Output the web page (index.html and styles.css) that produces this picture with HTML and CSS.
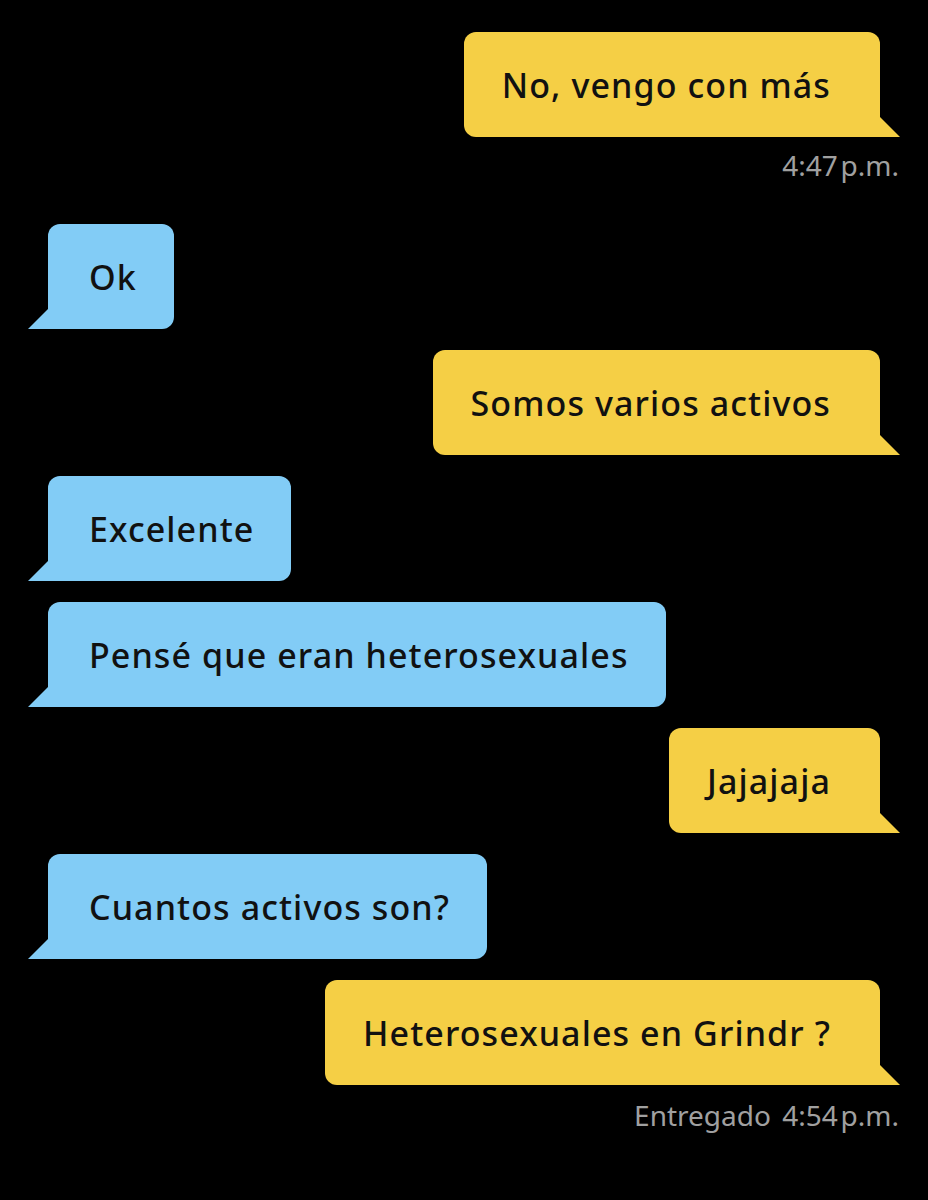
FILE: index.html
```html
<!doctype html>
<html lang="es">
<head>
    <meta charset="UTF-8">
    <title>Chat</title>
    <link rel="stylesheet" href="styles.css">
</head>
<body>
    <div class="chat">
        <div class="msg sent">No, vengo con más</div>
        <div class="time first">4:47&#8202;p.m.</div>
        <div class="msg recv">Ok</div>
        <div class="msg sent">Somos varios activos</div>
        <div class="msg recv">Excelente</div>
        <div class="msg recv">Pensé que eran heterosexuales</div>
        <div class="msg sent">Jajajaja</div>
        <div class="msg recv">Cuantos activos son?</div>
        <div class="msg sent">Heterosexuales en Grindr ?</div>
        <div class="time last"><span class="status">Entregado</span> 4:54&#8202;p.m.</div>
    </div>
</body>
</html>
```

FILE: styles.css
```css
body{
    margin:0;
    padding:0;
    background:#000;
    font-family:"Noto Sans","Open Sans",sans-serif;
}
.chat{
    display:flex;
    flex-direction:column;
    gap:21px;
    padding:32px 29px 40px 29px;
}
.msg{
    position:relative;
    height:105px;
    box-sizing:border-box;
    display:flex;
    align-items:center;
    font-size:34px;
    font-weight:500;
    letter-spacing:1.1px;
    color:#111;
    border-radius:12px;
}
.msg::after{
    content:"";
    position:absolute;
    bottom:0;
    width:20px;
    height:20px;
}
.sent{
    align-self:flex-end;
    margin-right:19px;
    padding:0 49px 0 38px;
    background:#f5cf45;
    border-bottom-right-radius:0;
}
.sent::after{
    right:-20px;
    background:#f5cf45;
    clip-path:polygon(0 0,100% 100%,0 100%);
}
.recv{
    align-self:flex-start;
    margin-left:19px;
    padding:0 37px 0 41px;
    background:#82ccf6;
    border-bottom-left-radius:0;
}
.recv::after{
    left:-20px;
    background:#82ccf6;
    clip-path:polygon(100% 0,100% 100%,0 100%);
}
.time{
    align-self:flex-end;
    font-size:28px;
    color:#a0a0a0;
    line-height:30px;
}
.time.first{
    margin-top:-8px;
    margin-bottom:23px;
}
.time.last{
    margin-top:-6px;
}
.status{
    margin-right:4px;
}
```
